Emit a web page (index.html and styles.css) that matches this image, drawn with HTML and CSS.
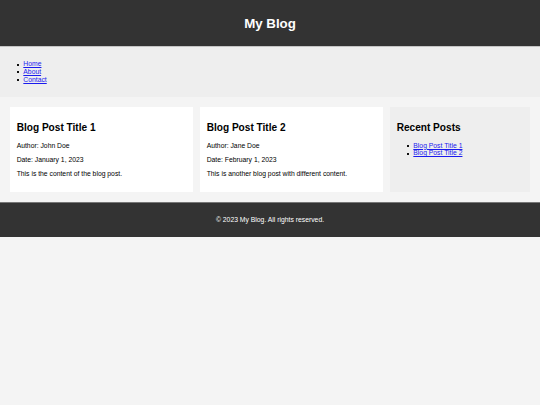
FILE: index.html
```html
<!DOCTYPE html>
<html lang="en">
<head>
<meta charset="utf-8">
<title>My Blog</title>
<link rel="stylesheet" href="styles.css">
</head>
<body>
<header class="site-header">
  <h1 class="site-title">My Blog</h1>
</header>
<nav class="site-nav">
  <ul class="nav-list">
    <li class="item"><a href="#">Home</a></li>
    <li class="item"><a href="#">About</a></li>
    <li class="item"><a href="#">Contact</a></li>
  </ul>
</nav>
<main class="content">
  <article class="post">
    <h2 class="post-title">Blog Post Title 1</h2>
    <p class="post-text">Author: John Doe</p>
    <p class="post-text">Date: January 1, 2023</p>
    <p class="post-text">This is the content of the blog post.</p>
  </article>
  <article class="post">
    <h2 class="post-title">Blog Post Title 2</h2>
    <p class="post-text">Author: Jane Doe</p>
    <p class="post-text">Date: February 1, 2023</p>
    <p class="post-text">This is another blog post with different content.</p>
  </article>
  <aside class="sidebar">
    <h2 class="post-title">Recent Posts</h2>
    <ul class="recent-list">
      <li class="item"><a href="#">Blog Post Title 1</a></li>
      <li class="item"><a href="#">Blog Post Title 2</a></li>
    </ul>
  </aside>
</main>
<footer class="site-footer">
  <p class="footer-text">&copy; 2023 My Blog. All rights reserved.</p>
</footer>
</body>
</html>
```
FILE: styles.css
```css
html, body {
  margin: 0;
  padding: 0;
}
body {
  background: #f4f4f4;
  font-family: "Liberation Sans", Arial, sans-serif;
  font-size: 6.8px;
  color: #000;
}
a {
  color: #1a1aee;
}
.site-header {
  background: #333;
  color: #fff;
  height: 46px;
  border-bottom: 1px solid #c4c4c4;
  display: flex;
  align-items: center;
  justify-content: center;
}
.site-title {
  margin: 0;
  font-size: 13.3px;
  line-height: 15px;
  font-weight: bold;
}
.site-nav {
  background: #eee;
  height: 50px;
  padding: 6.67px;
  box-sizing: border-box;
}
.nav-list {
  margin: 6.67px 0;
  padding-left: 16.67px;
  line-height: 7.67px;
  list-style: none;
}
.item::before {
  content: "";
  display: inline-block;
  width: 2px;
  height: 2px;
  background: #111;
  margin-left: -6px;
  margin-right: 4px;
  vertical-align: middle;
}
.content {
  display: grid;
  grid-template-columns: 183px 183px 140px;
  gap: 7px;
  padding: 10px;
  align-items: stretch;
}
.post {
  background: #fff;
  padding: 6.67px;
  min-height: 85px;
  box-sizing: border-box;
}
.sidebar {
  background: #eee;
  padding: 6.67px;
  box-sizing: border-box;
}
.post-title {
  font-size: 10.1px;
  line-height: 11.5px;
  margin: 8.3px 0;
  font-weight: bold;
}
.post-text {
  margin: 6.67px 0;
  line-height: 7.67px;
}
.recent-list {
  margin: 6.67px 0;
  padding-left: 16.67px;
  line-height: 7.67px;
  list-style: none;
}
.site-footer {
  background: #333;
  color: #fff;
  height: 35px;
  border-top: 1px solid #777;
  box-sizing: border-box;
  display: flex;
  align-items: center;
  justify-content: center;
}
.footer-text {
  margin: 0;
  line-height: 7.67px;
}
```
